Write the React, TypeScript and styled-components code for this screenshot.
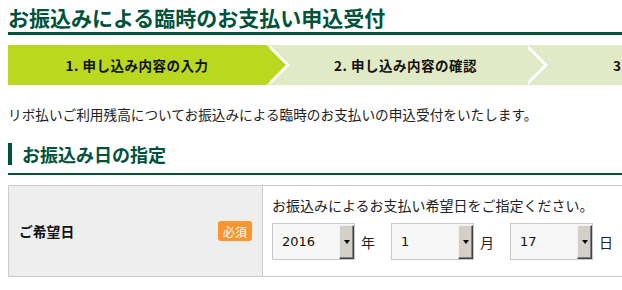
import styled, { createGlobalStyle } from 'styled-components'

const GlobalStyle = createGlobalStyle`
  html, body {
    margin: 0;
    padding: 0;
    background: #fff;
    overflow: hidden;
  }
  body {
    font-family: 'Noto Sans CJK JP', 'Noto Sans', sans-serif;
    color: #222;
  }
`

const steps = ['1. 申し込み内容の入力', '2. 申し込み内容の確認', '3. 申込受付完了']

const dateFields = [
  { value: '2016', unit: '年' },
  { value: '1', unit: '月' },
  { value: '17', unit: '日' },
]

export default function App() {
  return (
    <>
      <GlobalStyle />
      <Page>
        <Title>お振込みによる臨時のお支払い申込受付</Title>

        <StepBar>
          {steps.map((label, i) => (
            <Step key={label} $active={i === 0} $first={i === 0} $last={i === steps.length - 1}>
              {label}
            </Step>
          ))}
        </StepBar>

        <Lead>リボ払いご利用残高についてお振込みによる臨時のお支払いの申込受付をいたします。</Lead>

        <SectionHead>
          <SectionTitle>お振込み日の指定</SectionTitle>
        </SectionHead>

        <FormTable>
          <LabelCell>
            <LabelText>ご希望日</LabelText>
            <Required>必須</Required>
          </LabelCell>
          <FieldCell>
            <Note>お振込みによるお支払い希望日をご指定ください。</Note>
            <DateRow>
              {dateFields.map((f) => (
                <DatePart key={f.unit}>
                  <SelectBox>
                    <SelectValue>{f.value}</SelectValue>
                    <DropButton>
                      <DropArrow />
                    </DropButton>
                  </SelectBox>
                  <Unit>{f.unit}</Unit>
                </DatePart>
              ))}
            </DateRow>
          </FieldCell>
        </FormTable>
      </Page>
    </>
  )
}

const pageWidth = '774px'
const green = '#00523a'

const Page = styled.div`
  width: ${pageWidth};
  padding: 0 8px;
`

const Title = styled.h1`
  margin: 0;
  padding-top: 2px;
  font-size: 21px;
  line-height: 30px;
  font-weight: bold;
  color: ${green};
  border-bottom: 3px solid ${green};
  white-space: nowrap;
`

const StepBar = styled.div`
  display: grid;
  grid-template-columns: repeat(3, 1fr);
  height: 40px;
  margin-top: 10px;
`

const Step = styled.div<{ $active: boolean; $first: boolean; $last: boolean }>`
  position: relative;
  display: flex;
  align-items: center;
  justify-content: center;
  padding-left: ${(p) => (p.$first ? '0' : '21px')};
  background: ${(p) => (p.$active ? '#b9d81f' : '#e1eac6')};
  font-size: 13.5px;
  letter-spacing: 0.5px;
  font-weight: bold;
  color: #111;
  white-space: nowrap;

  &::before,
  &::after {
    content: '';
    display: ${(p) => (p.$last ? 'none' : 'block')};
    position: absolute;
    top: 0;
    width: 20px;
    height: 40px;
    clip-path: polygon(0 0, 100% 50%, 0 100%);
  }
  &::before {
    right: -24px;
    background: #fff;
    z-index: 1;
  }
  &::after {
    right: -20px;
    background: ${(p) => (p.$active ? '#b9d81f' : '#e1eac6')};
    z-index: 2;
  }
`

const Lead = styled.p`
  margin: 19px 0 0;
  font-size: 13.65px;
  line-height: 20px;
  color: #222;
  white-space: nowrap;
`

const SectionHead = styled.div`
  margin-top: 19px;
  padding-bottom: 8px;
  border-bottom: 2px solid ${green};
`

const SectionTitle = styled.h2`
  margin: 0;
  padding-left: 10px;
  border-left: 4px solid ${green};
  font-size: 18px;
  line-height: 22px;
  font-weight: bold;
  color: ${green};
`

const FormTable = styled.div`
  display: grid;
  grid-template-columns: 254px 1fr;
  margin-top: 10px;
  border: 1px solid #cccccc;
`

const LabelCell = styled.div`
  display: flex;
  align-items: center;
  justify-content: space-between;
  padding: 0 10px;
  background: #eeeeee;
  border-right: 1px solid #cccccc;
`

const LabelText = styled.span`
  font-size: 13.8px;
  font-weight: bold;
  color: #111;
`

const Required = styled.span`
  display: inline-flex;
  align-items: center;
  justify-content: center;
  width: 34px;
  height: 20px;
  border-radius: 3px;
  background: #f7952e;
  color: #fff;
  font-size: 12px;
`

const FieldCell = styled.div`
  padding: 10px 9px 16px;
`

const Note = styled.div`
  font-size: 14px;
  line-height: 18px;
  color: #222;
  white-space: nowrap;
`

const DateRow = styled.div`
  display: flex;
  align-items: center;
  margin-top: 9px;
`

const DatePart = styled.div`
  display: flex;
  align-items: center;
  margin-right: 16px;
`

const SelectBox = styled.div`
  display: flex;
  align-items: stretch;
  box-sizing: border-box;
  width: 83px;
  height: 37px;
  border: 1px solid #c8c8c8;
  background: #f7f7f7;
`

const SelectValue = styled.span`
  flex: 1;
  display: flex;
  align-items: center;
  padding-left: 9px;
  font-family: 'DejaVu Sans', 'Noto Sans', sans-serif;
  font-size: 13px;
  color: #1a1000;
`

const DropButton = styled.span`
  display: flex;
  align-items: center;
  justify-content: center;
  box-sizing: border-box;
  width: 15px;
  margin: 1px 0 0;
  background: #d4d0c8;
  border-top: 1px solid #f2f0ec;
  border-left: 1px solid #f2f0ec;
  border-right: 1px solid #404040;
  border-bottom: 1px solid #404040;
  box-shadow: inset -1px -1px 0 #808080;
`

const DropArrow = styled.span`
  width: 0;
  height: 0;
  border-left: 3.5px solid transparent;
  border-right: 3.5px solid transparent;
  border-top: 4px solid #000;
`

const Unit = styled.span`
  margin-left: 6px;
  font-size: 14px;
  color: #222;
`
